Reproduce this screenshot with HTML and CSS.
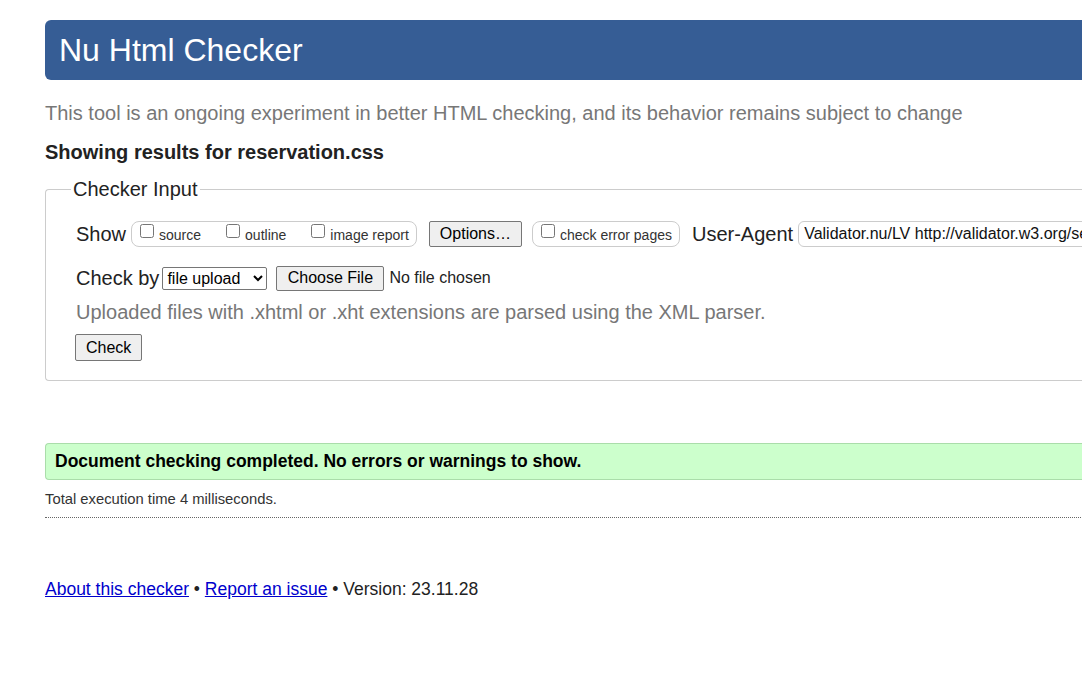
FILE: index.html
```html
<!DOCTYPE html>
<html lang="en">
<head>
<meta charset="utf-8">
<title>Nu Html Checker</title>
<link rel="stylesheet" href="styles.css">
</head>
<body>
<div class="page">
  <h1 class="banner">Nu Html Checker</h1>
  <p class="intro">This tool is an ongoing experiment in better HTML checking, and its behavior remains subject to change</p>
  <p class="showing">Showing results for reservation.css</p>
  <form class="checker">
    <fieldset class="box">
      <legend class="legend">Checker Input</legend>
      <div class="row row-show">
        <span class="lbl">Show</span>
        <span class="pill">
          <label class="opt"><input type="checkbox" class="cb"><span>source</span></label>
          <label class="opt"><input type="checkbox" class="cb"><span>outline</span></label>
          <label class="opt"><input type="checkbox" class="cb"><span>image report</span></label>
        </span>
        <button type="button" class="btn btn-options">Options…</button>
        <span class="pill pill-single">
          <label class="opt"><input type="checkbox" class="cb"><span>check error pages</span></label>
        </span>
        <span class="lbl lbl-ua">User-Agent</span>
        <input type="text" class="ua" value="Validator.nu/LV http://validator.w3.org/services">
      </div>
      <div class="row row-check">
        <span class="lbl">Check by</span>
        <select class="sel"><option>file upload</option></select>
        <span class="file">
          <button type="button" class="btn btn-file">Choose File</button>
          <span class="nofile">No file chosen</span>
        </span>
      </div>
      <p class="note">Uploaded files with .xhtml or .xht extensions are parsed using the XML parser.</p>
      <button type="button" class="btn btn-check">Check</button>
    </fieldset>
  </form>
  <div class="success">Document checking completed. No errors or warnings to show.</div>
  <p class="stats">Total execution time 4 milliseconds.</p>
  <p class="footer"><a href="#" class="link">About this checker</a> • <a href="#" class="link">Report an issue</a> • Version: 23.11.28</p>
</div>
</body>
</html>
```
FILE: styles.css
```css
html, body {
  margin: 0;
  padding: 0;
  overflow: hidden;
  background: #fff;
}
body {
  font-family: "Liberation Sans", Arial, sans-serif;
  color: #222;
}
.page {
  width: 1200px;
  padding: 20px 0 0 45px;
}
.banner {
  margin: 0;
  height: 60px;
  box-sizing: border-box;
  padding: 0 14px;
  background: #365d95;
  color: #fff;
  font-weight: normal;
  font-size: 32px;
  line-height: 60px;
  border-radius: 6px 0 0 6px;
}
.intro {
  margin: 21px 0 0;
  font-size: 20px;
  line-height: 24px;
  color: #777;
}
.showing {
  margin: 15px 0 0;
  font-size: 20px;
  line-height: 24px;
  font-weight: bold;
  color: #222;
}
.checker {
  margin: 13px 0 0;
}
.box {
  margin: 0;
  padding: 20px 0 19px 30px;
  border: 1px solid #ccc;
  border-right: none;
  border-radius: 4px 0 0 4px;
}
.legend {
  margin-left: -5px;
  padding: 0 2px;
  font-size: 20px;
  line-height: 24px;
}
.row {
  display: flex;
  align-items: center;
  white-space: nowrap;
}
.lbl {
  font-size: 20px;
  color: #222;
}
.row-show {
  height: 26px;
}
.row-show .lbl {
  margin-right: 5px;
}
.pill {
  display: inline-flex;
  align-items: center;
  gap: 25px;
  height: 26px;
  box-sizing: border-box;
  padding: 0 7px 0 8px;
  border: 1px solid #ccc;
  border-radius: 8px;
}
.opt {
  font-size: 14px;
  color: #333;
  display: inline-flex;
  align-items: center;
  gap: 4px;
}
.opt span {
  position: relative;
  top: 1px;
}
.cb {
  margin: 0 1px 0 0;
  width: 14px;
  height: 14px;
  position: relative;
  top: -3px;
}
.btn {
  font-family: "Liberation Sans", Arial, sans-serif;
  font-size: 16px;
  color: #000;
  background: #efefef;
  border: 1px solid #767676;
  border-radius: 2px;
  padding: 0 9px;
  height: 26px;
  line-height: 22px;
}
.btn-options {
  margin-left: 12px;
  width: 93px;
}
.pill-single {
  margin-left: 10px;
}
.lbl-ua {
  margin-left: 12px;
  margin-right: 7px;
}
.ua {
  display: inline-block;
  width: 400px;
  height: 26px;
  box-sizing: border-box;
  margin: 0;
  padding: 0 5px;
  border: 1px solid #ccc;
  border-radius: 6px;
  font-family: "Liberation Sans", Arial, sans-serif;
  font-size: 16px;
  color: #111;
  background: #fff;
}
.row-check {
  margin-top: 18px;
  height: 26px;
}
.row-check .lbl {
  margin-right: 3px;
}
.sel {
  font-family: "Liberation Sans", Arial, sans-serif;
  font-size: 16px;
  height: 23px;
  width: 105px;
  color: #000;
  border: 1px solid #767676;
  border-radius: 2px;
  background: #fff;
}
.file {
  margin-left: 9px;
  display: inline-flex;
  align-items: center;
}
.btn-file {
  width: 108px;
  height: 25px;
}
.nofile {
  margin-left: 5px;
  font-size: 16px;
  color: #222;
}
.note {
  margin: 9px 0 0;
  font-size: 20px;
  line-height: 24px;
  color: #777;
}
.btn-check {
  margin-top: 10px;
  margin-left: -1px;
  height: 27px;
  padding: 0 10px;
}
.success {
  margin-top: 62px;
  height: 37px;
  box-sizing: border-box;
  padding: 0 9px;
  background: #ccffcc;
  border: 1px solid #aaddaa;
  border-right: none;
  border-radius: 4px 0 0 4px;
  font-weight: bold;
  font-size: 17.5px;
  line-height: 35px;
  color: #000;
}
.stats {
  margin: 0;
  padding: 11px 0 9px;
  font-size: 14.8px;
  line-height: 17px;
  color: #333;
  border-bottom: 1px dotted #666;
}
.footer {
  margin: 60px 0 0;
  font-size: 17.5px;
  line-height: 22px;
  color: #222;
}
.link {
  color: #0000cc;
  text-decoration: underline;
}
```
